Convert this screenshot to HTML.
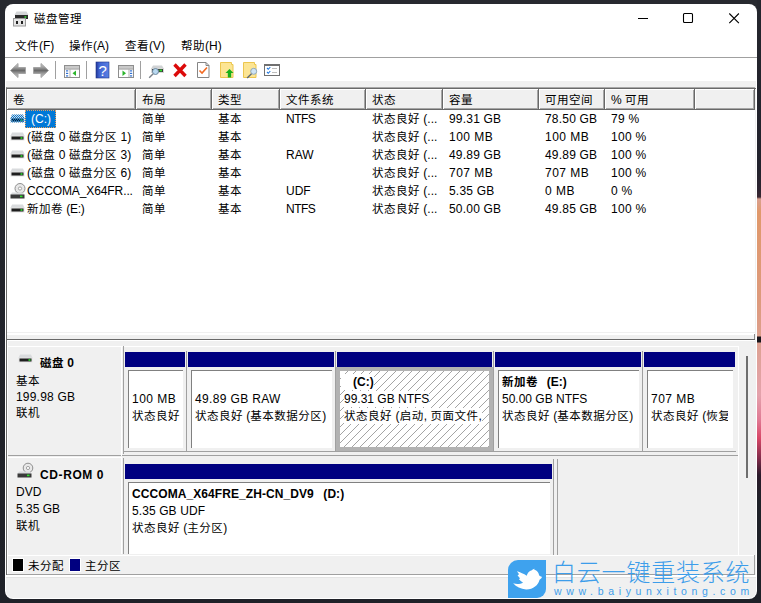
<!DOCTYPE html>
<html lang="zh-CN">
<head>
<meta charset="utf-8">
<title>磁盘管理</title>
<style>
html,body{margin:0;padding:0;}
body{width:761px;height:603px;overflow:hidden;background:linear-gradient(to bottom,#27292f 0,#24262d 200px,#1f2128 603px);position:relative;
 font-family:"Liberation Sans","Noto Sans CJK SC",sans-serif;font-size:12px;color:#000;}
.a{position:absolute;}
.t{position:absolute;white-space:nowrap;line-height:16px;height:16px;font-size:12px;}
.b{font-weight:bold;}
.c{font-size:11.5px;letter-spacing:0.5px;}
.wm .c{font-size:inherit;letter-spacing:inherit;}
#wall{left:757px;top:0;width:4px;height:603px;
 background:linear-gradient(to bottom,#24262d 0,#22222c 170px,#2e2430 190px,#3a2832 197px,#d9a090 199px,#e0996b 212px,#dd9a7c 300px,#dd9f8c 336px,#17151a 337px,#17151a 342px,#dda292 343px,#e4a2ac 395px,#e07a94 420px,#d84868 438px,#7a2a48 460px,#2a1a2a 475px,#1f2128 500px,#1f2128 603px);}
#win{left:5px;top:4px;width:752px;height:595px;background:#fff;border-radius:8px;overflow:hidden;}
/* everything inside #win uses page coordinates via inner offset wrapper */
#in{position:absolute;left:-5px;top:-4px;width:761px;height:603px;}
.hl{position:absolute;height:1px;}
.vl{position:absolute;width:1px;}
.navy{position:absolute;background:#000080;height:15px;top:352px;}
.pbox{position:absolute;background:#fff;top:370px;height:78px;border-top:1px solid #808080;border-left:1px solid #808080;box-sizing:border-box;}
.hd{position:absolute;top:89px;height:20px;background:#f0f0f0;border-right:1px solid #696969;box-sizing:border-box;box-shadow:inset 1px 1px 0 #fff, inset -1px -1px 0 #a6a6a6;}
</style>
</head>
<body>
<div id="wall" class="a"></div>
<div id="win" class="a"><div id="in">


<svg class="a" style="left:13px;top:10px" width="17" height="17" viewBox="0 0 17 17">
 <path d="M3.5 1.5h10l2 3.5H1.5z" fill="#d4d6d8"/>
 <rect x="2" y="5" width="13" height="4" fill="#2b2b2b"/>
 <rect x="11.5" y="6.2" width="1.8" height="1.6" fill="#35d335"/>
 <rect x="0.5" y="8.5" width="12" height="7.5" fill="#e6e6e6" stroke="#9a9a9a" stroke-width="1"/>
 <rect x="3" y="11" width="2" height="3" fill="#222"/>
 <rect x="8" y="11" width="2" height="3" fill="#222"/>
</svg>
<div class="t" style="left:34px;top:11px;"><span class="c">磁盘管理</span></div>
<svg class="a" style="left:630px;top:8px" width="120" height="20" viewBox="0 0 120 20">
 <path d="M8 10.500h10" stroke="#000" stroke-width="1.100" fill="none"/>
 <rect x="53.500" y="5.500" width="9" height="9" rx="1" fill="none" stroke="#000" stroke-width="1.100"/>
 <path d="M99.300 5.500l9.600 9.600M108.900 5.500l-9.600 9.600" stroke="#000" stroke-width="1.100" fill="none"/>
</svg>


<div class="t" style="left:15px;top:38px;"><span class="c">文件</span>(F)</div>
<div class="t" style="left:69px;top:38px;"><span class="c">操作</span>(A)</div>
<div class="t" style="left:125px;top:38px;"><span class="c">查看</span>(V)</div>
<div class="t" style="left:181px;top:38px;"><span class="c">帮助</span>(H)</div>
<div class="hl" style="left:5px;top:57px;width:752px;background:#a0a0a0;"></div>


<div id="tb">
<svg class="a" style="left:5px;top:58px" width="300" height="23" viewBox="5 58 300 23">
<defs>
<linearGradient id="ga" x1="0" y1="0" x2="0" y2="1"><stop offset="0" stop-color="#cfcfcf"/><stop offset="0.300" stop-color="#9a9a9a"/><stop offset="0.500" stop-color="#6a6a6a"/><stop offset="0.700" stop-color="#9a9a9a"/><stop offset="1" stop-color="#c4c4c4"/></linearGradient>
<linearGradient id="gh" x1="0" y1="0" x2="1" y2="0"><stop offset="0" stop-color="#22389a"/><stop offset="0.25" stop-color="#3f62d0"/><stop offset="1" stop-color="#5a80e4"/></linearGradient>
</defs>

<path d="M10.5 70.5l7.500-7v4h7.500v6h-7.500v4z" fill="url(#ga)" stroke="#a4a4a4" stroke-width="1" stroke-linejoin="round"/>
<path d="M48.500 70.500l-7.500-7v4h-7.500v6h7.500v4z" fill="url(#ga)" stroke="#a4a4a4" stroke-width="1" stroke-linejoin="round"/>
<rect x="55" y="61" width="1" height="18" fill="#a0a0a0"/>

<rect x="64.500" y="65.500" width="15" height="12" fill="#fff" stroke="#8e8e8e"/>
<rect x="65" y="66" width="14" height="2.500" fill="#c9c9c9"/>
<rect x="65" y="68.500" width="14" height="1" fill="#8e8e8e"/>
<rect x="69.500" y="69" width="1" height="8" fill="#b0b0b0"/>
<rect x="66" y="70.300" width="2.200" height="1.200" fill="#2f6fd0"/><rect x="66" y="72.800" width="2.200" height="1.200" fill="#2f6fd0"/><rect x="66" y="75.300" width="2.200" height="1.200" fill="#2f6fd0"/>
<path d="M76 70.500v5.500l-3.500-2.750z" fill="#2cb52c"/>
<rect x="86" y="61" width="1" height="18" fill="#a0a0a0"/>

<rect x="96" y="62" width="13" height="16" fill="url(#gh)"/>
<rect x="96" y="62" width="13" height="16" fill="none" stroke="#1f3286" stroke-width="0.600"/>
<text x="102.700" y="75.500" font-family="Liberation Sans, sans-serif" font-size="15" fill="#fff" text-anchor="middle">?</text>

<rect x="118.500" y="65.500" width="15" height="12" fill="#fff" stroke="#8e8e8e"/>
<rect x="119" y="66" width="14" height="2.500" fill="#c9c9c9"/>
<rect x="119" y="68.500" width="14" height="1" fill="#8e8e8e"/>
<rect x="128.500" y="69" width="1" height="8" fill="#b0b0b0"/>
<rect x="130" y="70.300" width="2.200" height="1.200" fill="#2f6fd0"/><rect x="130" y="72.800" width="2.200" height="1.200" fill="#2f6fd0"/><rect x="130" y="75.300" width="2.200" height="1.200" fill="#2f6fd0"/>
<path d="M122.500 70.500v5.500l3.500-2.750z" fill="#2cb52c"/>
<rect x="140" y="61" width="1" height="18" fill="#a0a0a0"/>

<path d="M153 65.500h9l1.500 2.500h-12z" fill="#d0d2d4"/>
<rect x="151" y="68" width="13" height="5" fill="#d8d8d8"/>
<rect x="152" y="69" width="11" height="3" fill="#3a3a3a"/>
<rect x="159.500" y="69.600" width="2.500" height="1.800" fill="#2fe02f"/>
<circle cx="155.500" cy="71.500" r="3" fill="#b8d8f0" stroke="#6f8aa0" stroke-width="1"/>
<path d="M153.200 73.800l-4 4" stroke="#7a8088" stroke-width="1.400"/>

<path d="M174.500 64.500l11 11.500M185.500 64.500l-11 11.500" stroke="#dc0a0a" stroke-width="3.400" stroke-linecap="butt"/>

<path d="M197.500 62.500h8.500l3 3v12h-11.500z" fill="#fff" stroke="#858585"/>
<path d="M206 62.500v3h3" fill="none" stroke="#858585"/>
<path d="M199.500 70.500l2.500 2.500 5-5.500" fill="none" stroke="#f26a22" stroke-width="1.600"/>

<path d="M220.500 62.500h11v2h1.500v13h-12.500z" fill="#fce594" stroke="#ecc64e"/>
<path d="M229.500 69l4 4h-2.300v4.500h-3.400v-4.500h-2.300z" fill="#19b019"/>

<path d="M243.500 62.500h11v2h1.500v13h-12.500z" fill="#fce594" stroke="#ecc64e"/>
<circle cx="253.700" cy="71.300" r="3" fill="#cfe4f4" stroke="#8fa8bc" stroke-width="1"/>
<path d="M251.500 73.700l-4.300 4.300" stroke="#606a74" stroke-width="1.400"/>

<rect x="264.500" y="65" width="15" height="10.500" fill="#fff" stroke="#707070"/>
<rect x="264" y="64" width="16" height="2" fill="#707070"/>
<path d="M267 68l1.300 1.300 2-2.300M267 72l1.300 1.300 2-2.300" fill="none" stroke="#1f78e0" stroke-width="1.100"/>
<rect x="272" y="68" width="5" height="1" fill="#bdbdbd"/><rect x="272" y="72" width="5" height="1" fill="#bdbdbd"/>
</svg>
</div>


<div class="a" style="left:6px;top:81px;width:750px;height:517px;background:#f0f0f0;border-radius:0 0 7px 7px;"></div>


<div class="a" id="list" style="left:6px;top:87px;width:749px;height:245px;background:#fff;border-left:1px solid #696969;border-top:1px solid #a8a8a8;box-sizing:border-box;"></div>
<div class="hl" style="left:6px;top:88px;width:750px;background:#696969;"></div>
<div id="hdr">
<div class="hd" style="left:7px;width:129px;"></div>
<div class="t" style="left:13px;top:92px;"><span class="c">卷</span></div>
<div class="hd" style="left:136px;width:76px;"></div>
<div class="t" style="left:142px;top:92px;"><span class="c">布局</span></div>
<div class="hd" style="left:212px;width:68px;"></div>
<div class="t" style="left:218px;top:92px;"><span class="c">类型</span></div>
<div class="hd" style="left:280px;width:86px;"></div>
<div class="t" style="left:286px;top:92px;"><span class="c">文件系统</span></div>
<div class="hd" style="left:366px;width:77px;"></div>
<div class="t" style="left:372px;top:92px;"><span class="c">状态</span></div>
<div class="hd" style="left:443px;width:96px;"></div>
<div class="t" style="left:449px;top:92px;"><span class="c">容量</span></div>
<div class="hd" style="left:539px;width:66px;"></div>
<div class="t" style="left:545px;top:92px;"><span class="c">可用空间</span></div>
<div class="hd" style="left:605px;width:90px;"></div>
<div class="t" style="left:611px;top:92px;">% <span class="c">可用</span></div>
<div class="hd" style="left:695px;width:60px;"></div>
<div class="hl" style="left:7px;top:109px;width:748px;background:#696969;"></div>
</div>
<div id="rows">
<svg class="a" style="left:10px;top:114px" width="15" height="10" viewBox="0 0 15 10"><defs><pattern id="dz" width="2" height="2" patternUnits="userSpaceOnUse"><rect width="1" height="1" fill="#0078d7"/><rect x="1" y="1" width="1" height="1" fill="#0078d7"/></pattern></defs><path d="M2 0.5h11l1.5 3.5h-14z" fill="#d9dbdd"/><rect x="0.5" y="3.5" width="14" height="5" fill="#e4e4e4"/><rect x="1.5" y="4.5" width="12" height="3" fill="#1e1e1e"/><rect x="10.5" y="5.2" width="2" height="1.6" fill="#2fe02f"/><path d="M2 0.500h11l1.500 3.500v4.500h-14v-4.500z" fill="url(#dz)"/></svg>
<div class="a" style="left:25px;top:110px;width:31px;height:18px;background:#0078d7;box-sizing:border-box;border:1px dotted #e8a060;"></div>
<div class="t" style="left:31px;top:111px;color:#fff;">(C:)</div>
<div class="t" style="left:142px;top:111px;"><span class="c">简单</span></div>
<div class="t" style="left:218px;top:111px;"><span class="c">基本</span></div>
<div class="t" style="left:286px;top:111px;letter-spacing:-.5px;">NTFS</div>
<div class="t" style="left:372px;top:111px;"><span class="c">状态良好</span> (...</div>
<div class="t" style="left:449px;top:111px;letter-spacing:.2px;">99.31 GB</div>
<div class="t" style="left:545px;top:111px;letter-spacing:.2px;">78.50 GB</div>
<div class="t" style="left:611px;top:111px;letter-spacing:.3px;">79 %</div>
<svg class="a" style="left:10px;top:132px" width="15" height="10" viewBox="0 0 15 10"><path d="M2 0.5h11l1.5 3.5h-14z" fill="#d9dbdd"/><rect x="0.5" y="3.5" width="14" height="5" fill="#e4e4e4"/><rect x="1.5" y="4.5" width="12" height="3" fill="#1e1e1e"/><rect x="10.5" y="5.2" width="2" height="1.6" fill="#2fe02f"/></svg>
<div class="t" style="left:27px;top:129px;letter-spacing:.15px;">(<span class="c">磁盘</span> 0 <span class="c">磁盘分区</span> 1)</div>
<div class="t" style="left:142px;top:129px;"><span class="c">简单</span></div>
<div class="t" style="left:218px;top:129px;"><span class="c">基本</span></div>
<div class="t" style="left:372px;top:129px;"><span class="c">状态良好</span> (...</div>
<div class="t" style="left:449px;top:129px;letter-spacing:.5px;">100 MB</div>
<div class="t" style="left:545px;top:129px;letter-spacing:.5px;">100 MB</div>
<div class="t" style="left:611px;top:129px;letter-spacing:.3px;">100 %</div>
<svg class="a" style="left:10px;top:150px" width="15" height="10" viewBox="0 0 15 10"><path d="M2 0.5h11l1.5 3.5h-14z" fill="#d9dbdd"/><rect x="0.5" y="3.5" width="14" height="5" fill="#e4e4e4"/><rect x="1.5" y="4.5" width="12" height="3" fill="#1e1e1e"/><rect x="10.5" y="5.2" width="2" height="1.6" fill="#2fe02f"/></svg>
<div class="t" style="left:27px;top:147px;letter-spacing:.15px;">(<span class="c">磁盘</span> 0 <span class="c">磁盘分区</span> 3)</div>
<div class="t" style="left:142px;top:147px;"><span class="c">简单</span></div>
<div class="t" style="left:218px;top:147px;"><span class="c">基本</span></div>
<div class="t" style="left:286px;top:147px;">RAW</div>
<div class="t" style="left:372px;top:147px;"><span class="c">状态良好</span> (...</div>
<div class="t" style="left:449px;top:147px;letter-spacing:.2px;">49.89 GB</div>
<div class="t" style="left:545px;top:147px;letter-spacing:.2px;">49.89 GB</div>
<div class="t" style="left:611px;top:147px;letter-spacing:.3px;">100 %</div>
<svg class="a" style="left:10px;top:168px" width="15" height="10" viewBox="0 0 15 10"><path d="M2 0.5h11l1.5 3.5h-14z" fill="#d9dbdd"/><rect x="0.5" y="3.5" width="14" height="5" fill="#e4e4e4"/><rect x="1.5" y="4.5" width="12" height="3" fill="#1e1e1e"/><rect x="10.5" y="5.2" width="2" height="1.6" fill="#2fe02f"/></svg>
<div class="t" style="left:27px;top:165px;letter-spacing:.15px;">(<span class="c">磁盘</span> 0 <span class="c">磁盘分区</span> 6)</div>
<div class="t" style="left:142px;top:165px;"><span class="c">简单</span></div>
<div class="t" style="left:218px;top:165px;"><span class="c">基本</span></div>
<div class="t" style="left:372px;top:165px;"><span class="c">状态良好</span> (...</div>
<div class="t" style="left:449px;top:165px;letter-spacing:.5px;">707 MB</div>
<div class="t" style="left:545px;top:165px;letter-spacing:.5px;">707 MB</div>
<div class="t" style="left:611px;top:165px;letter-spacing:.3px;">100 %</div>
<svg class="a" style="left:10px;top:183px" width="16" height="16" viewBox="0 0 16 16"><circle cx="10" cy="5.500" r="5" fill="#e8e8e8" stroke="#8f8f8f" stroke-width="1"/><circle cx="10" cy="5.500" r="1.600" fill="#fff" stroke="#8f8f8f" stroke-width="0.8"/><path d="M2 9.5h11l1.5 2.5h-14z" fill="#d9dbdd"/><rect x="0.5" y="11.5" width="14" height="4" fill="#3a3a3a"/><rect x="10" y="12.6" width="2.5" height="1.6" fill="#2fe02f"/></svg>
<div class="t" style="left:27px;top:183px;letter-spacing:-.1px;">CCCOMA_X64FR...</div>
<div class="t" style="left:142px;top:183px;"><span class="c">简单</span></div>
<div class="t" style="left:218px;top:183px;"><span class="c">基本</span></div>
<div class="t" style="left:286px;top:183px;">UDF</div>
<div class="t" style="left:372px;top:183px;"><span class="c">状态良好</span> (...</div>
<div class="t" style="left:449px;top:183px;letter-spacing:.2px;">5.35 GB</div>
<div class="t" style="left:545px;top:183px;letter-spacing:.5px;">0 MB</div>
<div class="t" style="left:611px;top:183px;letter-spacing:.3px;">0 %</div>
<svg class="a" style="left:10px;top:204px" width="15" height="10" viewBox="0 0 15 10"><path d="M2 0.5h11l1.5 3.5h-14z" fill="#d9dbdd"/><rect x="0.5" y="3.5" width="14" height="5" fill="#e4e4e4"/><rect x="1.5" y="4.5" width="12" height="3" fill="#1e1e1e"/><rect x="10.5" y="5.2" width="2" height="1.6" fill="#2fe02f"/></svg>
<div class="t" style="left:27px;top:201px;letter-spacing:-.2px;"><span class="c">新加卷</span> (E:)</div>
<div class="t" style="left:142px;top:201px;"><span class="c">简单</span></div>
<div class="t" style="left:218px;top:201px;"><span class="c">基本</span></div>
<div class="t" style="left:286px;top:201px;letter-spacing:-.5px;">NTFS</div>
<div class="t" style="left:372px;top:201px;"><span class="c">状态良好</span> (...</div>
<div class="t" style="left:449px;top:201px;letter-spacing:.2px;">50.00 GB</div>
<div class="t" style="left:545px;top:201px;letter-spacing:.2px;">49.85 GB</div>
<div class="t" style="left:611px;top:201px;letter-spacing:.3px;">100 %</div>
</div>


<div id="low">
<div class="hl" style="left:7px;top:333px;width:748px;height:2px;background:#fff;"></div>
<div class="hl" style="left:6px;top:339px;width:749px;background:#696969;"></div><div class="vl" style="left:754px;top:334px;height:5px;background:#8a8a8a;"></div>
<div class="hl" style="left:7px;top:340px;width:748px;background:#fff;"></div>
<div class="vl" style="left:6px;top:88px;height:487px;background:#696969;"></div>
<div class="vl" style="left:7px;top:340px;height:236px;background:#fff;"></div>
<div class="hl" style="left:8px;top:346px;width:730px;background:#fff;"></div>
<div class="hl" style="left:8px;top:455px;width:730px;background:#a0a0a0;"></div>
<div class="vl" style="left:121px;top:346px;height:110px;background:#fff;"></div>
<div class="vl" style="left:123px;top:346px;height:108px;background:#a0a0a0;"></div>
<div class="vl" style="left:123px;top:458px;height:96px;background:#a0a0a0;"></div>
<div class="vl" style="left:121px;top:457px;height:97px;background:#fff;"></div>
<div class="hl" style="left:8px;top:457px;width:114px;background:#fff;"></div>
<svg class="a" style="left:18px;top:354px" width="15" height="10" viewBox="0 0 15 10"><path d="M2 0.5h11l1.5 3.5h-14z" fill="#d9dbdd"/><rect x="0.5" y="3.5" width="14" height="5" fill="#e4e4e4"/><rect x="1.5" y="4.5" width="12" height="3" fill="#1e1e1e"/><rect x="10.5" y="5.2" width="2" height="1.6" fill="#2fe02f"/></svg>
<div class="t b" style="left:40px;top:355px;"><span class="c">磁盘</span> 0</div>
<div class="t" style="left:16px;top:373px;"><span class="c">基本</span></div>
<div class="t" style="left:16px;top:389px;letter-spacing:.2px;">199.98 GB</div>
<div class="t" style="left:16px;top:405px;"><span class="c">联机</span></div>
<div class="navy" style="left:125px;width:60px;"></div>
<div class="pbox" style="left:128px;width:55px;"></div>
<div class="navy" style="left:188px;width:146px;"></div>
<div class="vl" style="left:186px;top:351px;height:101px;background:#a0a0a0;"></div>
<div class="pbox" style="left:191px;width:141px;"></div>
<div class="navy" style="left:337px;width:155px;"></div>
<div class="vl" style="left:335px;top:351px;height:101px;background:#a0a0a0;"></div>
<div class="navy" style="left:495px;width:146px;"></div>
<div class="vl" style="left:493px;top:351px;height:101px;background:#a0a0a0;"></div>
<div class="pbox" style="left:498px;width:141px;"></div>
<div class="navy" style="left:644px;width:91px;"></div>
<div class="vl" style="left:642px;top:351px;height:101px;background:#a0a0a0;"></div>
<div class="pbox" style="left:647px;width:86px;"></div>
<div class="a" style="left:336px;top:367px;width:157px;height:84px;box-sizing:border-box;border:4px solid #b2b2b2;background:#fff;overflow:hidden;">
<svg width="149" height="76" viewBox="0 0 149 76" style="display:block"><defs><pattern id="hp" width="8" height="8" patternUnits="userSpaceOnUse"><path d="M-1 9L9 -1M-1 1L1 -1M7 9L9 7" stroke="#9a9a9a" stroke-width="0.9" fill="none"/></pattern></defs><rect width="149" height="76" fill="url(#hp)"/></svg></div>
<div class="hl" style="left:124px;top:451px;width:612px;background:#a0a0a0;"></div>
<div class="t" style="left:132px;top:391px;letter-spacing:.5px;">100 MB</div>
<div class="t" style="left:132px;top:408px;"><span class="c">状态良好</span></div>
<div class="t" style="left:195px;top:391px;letter-spacing:.35px;">49.89 GB RAW</div>
<div class="t" style="left:195px;top:408px;"><span class="c">状态良好</span> (<span class="c">基本数据分区</span>)</div>
<div class="t b" style="left:341px;top:374px;background:#fff;padding-left:12px;">(C:)</div>
<div class="t" style="left:344px;top:391px;background:#fff;">99.31 GB NTFS</div>
<div class="t" style="left:344px;top:408px;background:#fff;letter-spacing:.15px;"><span class="c">状态良好</span> (<span class="c">启动</span>, <span class="c">页面文件</span>,</div>
<div class="t b" style="left:502px;top:374px;word-spacing:1px;"><span class="c">新加卷</span>&nbsp; (E:)</div>
<div class="t" style="left:502px;top:391px;">50.00 GB NTFS</div>
<div class="t" style="left:502px;top:408px;"><span class="c">状态良好</span> (<span class="c">基本数据分区</span>)</div>
<div class="t" style="left:651px;top:391px;letter-spacing:.5px;">707 MB</div>
<div class="a" style="left:651px;top:408px;width:77px;height:16px;overflow:hidden;"><div class="t" style="left:0;top:0;"><span class="c">状态良好</span> (<span class="c">恢复</span></div></div>
<div class="a" style="left:746px;top:356px;width:2px;height:122px;background:#6e6e6e;"></div>
<svg class="a" style="left:17px;top:462px" width="17" height="16" viewBox="0 0 17 16"><circle cx="11" cy="6" r="4.800" fill="#e8e8e8" stroke="#8f8f8f" stroke-width="1"/><circle cx="11" cy="6" r="1.600" fill="#fff" stroke="#8f8f8f" stroke-width="0.8"/><path d="M2 9.5h11l1.5 2.5h-14z" fill="#d9dbdd"/><rect x="0.5" y="11.5" width="14" height="4" fill="#3a3a3a"/><rect x="10" y="12.6" width="2.5" height="1.6" fill="#2fe02f"/></svg>
<div class="t b" style="left:40px;top:467px;letter-spacing:.6px;">CD-ROM 0</div>
<div class="t" style="left:16px;top:484px;">DVD</div>
<div class="t" style="left:16px;top:501px;">5.35 GB</div>
<div class="t" style="left:16px;top:518px;"><span class="c">联机</span></div>
<div class="navy" style="left:125px;width:427px;top:464px;"></div>
<div class="pbox" style="left:128px;width:422px;top:482px;height:72px;"></div>
<div class="vl" style="left:553px;top:459px;height:96px;background:#a0a0a0;"></div><div class="vl" style="left:557px;top:459px;height:96px;background:#a0a0a0;"></div>
<div class="t b" style="left:132px;top:486px;letter-spacing:.08px;word-spacing:1.3px;">CCCOMA_X64FRE_ZH-CN_DV9&nbsp; (D:)</div>
<div class="t" style="left:132px;top:503px;letter-spacing:.1px;">5.35 GB UDF</div>
<div class="t" style="left:132px;top:520px;"><span class="c">状态良好</span> (<span class="c">主分区</span>)</div>
<div class="a" style="left:8px;top:555px;width:746px;height:19px;background:#f0f0f0;"></div><div class="hl" style="left:8px;top:555px;width:746px;background:#fff;"></div>
<div class="a" style="left:13px;top:559px;width:10px;height:12px;background:#000;box-shadow:0 0 0 1px #fff;"></div>
<div class="t" style="left:28px;top:558px;"><span class="c">未分配</span></div>
<div class="a" style="left:70px;top:559px;width:10px;height:12px;background:#000080;box-shadow:0 0 0 1px #fff;"></div>
<div class="t" style="left:85px;top:558px;"><span class="c">主分区</span></div>
<div class="hl" style="left:7px;top:574px;width:748px;background:#a0a0a0;"></div>
<div class="hl" style="left:6px;top:575px;width:750px;height:2px;background:#fff;"></div><div class="hl" style="left:6px;top:577px;width:750px;background:#e4e4e4;"></div><div class="vl" style="left:754px;top:555px;height:20px;background:#a0a0a0;"></div><div class="vl" style="left:738px;top:346px;height:209px;background:#fff;"></div>
<div class="a" style="left:508px;top:560px;width:38px;height:38px;background:#3ea2ee;border-radius:10px 0 9px 0;"></div>
<svg class="a" style="left:504px;top:556px" width="46" height="46" viewBox="0 0 603 603"><path d="M495 272C480 268 470 262 462 255C455 215 425 180 392 176L404 166C388 168 374 176 365 186C330 196 305 226 298 258C260 235 215 212 168 200C180 215 190 228 198 238L178 252C190 268 200 282 210 292L196 306C210 322 228 338 250 350C215 368 165 372 120 358C160 405 220 435 290 438C380 440 450 385 466 312C478 305 488 295 495 285Z" fill="#fdfefe"/></svg>
<div class="a wm" style="left:552px;top:558px;white-space:nowrap;font-size:24px;line-height:30px;color:#3d9dea;font-weight:300;letter-spacing:0.8px;"><span class="c">白云一键重装系统</span></div>
<div class="a wm" style="left:554px;top:585px;white-space:nowrap;font-size:10.5px;line-height:12px;color:#3d9dea;letter-spacing:4.65px;">www.baiyunxitong.com</div>
</div>

</div></div>
</body>
</html>
